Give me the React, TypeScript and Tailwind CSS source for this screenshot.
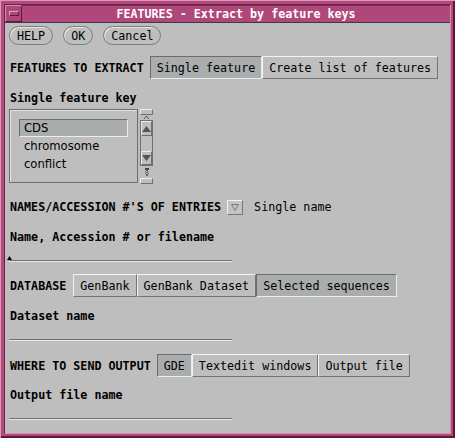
import React from "react";
import clsx from "clsx";

const mono = "font-[family-name:'DejaVu_Sans_Mono',monospace] text-[11.7px] leading-[14px] text-black";
const sans = "font-[family-name:'DejaVu_Sans',sans-serif] text-[11.6px] leading-[14px] text-black";

function Pill({ label }: { label: string }) {
  return (
    <div className="h-[19px] px-[7px] flex items-center rounded-full border border-[#7c7c7c] shadow-[inset_1px_1px_0_#e6e6e6]">
      <span className={mono}>{label}</span>
    </div>
  );
}

function Seg({ label, on }: { label: string; on?: boolean }) {
  return (
    <div
      className={clsx(
        "h-[23px] px-[6px] flex items-center border",
        on
          ? "bg-[#a9adad] border-t-[#6c6c6c] border-l-[#6c6c6c] border-b-[#ececec] border-r-[#ececec]"
          : "bg-[#bebebe] border-t-[#f2f2f2] border-l-[#f2f2f2] border-b-[#737373] border-r-[#737373]"
      )}
    >
      <span className={mono}>{label}</span>
    </div>
  );
}

function Label({ text, className }: { text: string; className?: string }) {
  return <div className={clsx(mono, "font-bold ml-[1px] h-[14px] whitespace-nowrap", className)}>{text}</div>;
}

function FieldLine({ caret, className }: { caret?: boolean; className?: string }) {
  return (
    <div className={clsx("relative w-[223px] h-[2px] border-t border-[#6e6e6e] bg-[#e8e8e8]", className)}>
      {caret && (
        <svg className="absolute left-[-2px] top-[-5px]" width="5" height="5" viewBox="0 0 5 5">
          <path d="M2.5 0 L5 4 L0 4 Z" fill="#000" />
        </svg>
      )}
    </div>
  );
}

function ScrollBar() {
  const box = "border border-t-[#ececec] border-l-[#ececec] border-b-[#6e6e6e] border-r-[#6e6e6e]";
  return (
    <div className="w-[13px] flex flex-col">
      <div className={clsx(box, "h-[6px]")} />
      <div className="h-[5px] flex justify-center items-center">
        <svg width="5" height="3" viewBox="0 0 5 3">
          <path d="M0 3 L2.5 0 L5 3" fill="none" stroke="#555" strokeWidth="1" />
        </svg>
      </div>
      <div className="border border-[#707070] flex flex-col">
        <div className={clsx(box, "h-[15px] flex items-center justify-center")}>
          <svg width="9" height="6" viewBox="0 0 9 6">
            <path d="M4.5 0 L9 6 L0 6 Z" fill="#555" />
          </svg>
        </div>
        <div className="h-[15px]" />
        <div className={clsx(box, "h-[14px] flex items-center justify-center")}>
          <svg width="9" height="6" viewBox="0 0 9 6">
            <path d="M0 0 L9 0 L4.5 6 Z" fill="#555" />
          </svg>
        </div>
      </div>
      <div className="h-[12px] flex justify-center items-center">
        <svg width="4" height="8" viewBox="0 0 4 8">
          <rect x="0" y="0" width="4" height="2" fill="#444" />
          <rect x="1" y="2" width="2" height="1" fill="#666" />
          <rect x="0" y="3" width="1" height="1" fill="#666" />
          <rect x="2" y="3" width="1" height="1" fill="#666" />
          <rect x="1" y="4" width="2" height="1" fill="#666" />
          <rect x="0" y="5" width="1" height="1" fill="#666" />
          <rect x="3" y="5" width="1" height="1" fill="#666" />
          <rect x="1" y="6" width="2" height="2" fill="#666" />
        </svg>
      </div>
      <div className={clsx(box, "h-[6px]")} />
    </div>
  );
}

export default function App() {
  return (
    <div className="w-[455px] h-[438px] bg-[#b24a7b] p-[4px] shadow-[inset_1px_1px_0_#e195b8,inset_-2px_-2px_0_#5a1a3b]">
      <div className="w-full h-full flex flex-col border border-t-[#6a2148] border-l-[#6a2148] border-b-[#d98aae] border-r-[#d98aae]">
        {/* title bar */}
        <div className="h-[18px] flex border-b border-[#3c3c3c] bg-[#b0477a]">
          <div className="w-[17px] h-[17px] flex items-center justify-center border border-t-[#d98aae] border-l-[#d98aae] border-b-[#5e1c3e] border-r-[#5e1c3e]">
            <div className="w-[10px] h-[5px] bg-[#b0477a] border border-t-[#e7a3c3] border-l-[#e7a3c3] border-b-[#5e1c3e] border-r-[#5e1c3e]" />
          </div>
          <div className="flex-1 flex items-center justify-center border-t border-[#7c2a55]">
            <span className={clsx(mono, "font-bold text-white")}>FEATURES - Extract by feature keys</span>
          </div>
        </div>

        {/* body */}
        <div className="flex-1 bg-[#bebebe] flex flex-col pl-[4px]">
          <div className="flex gap-[10px] mt-[3px]">
            <Pill label="HELP" />
            <Pill label="OK" />
            <Pill label="Cancel" />
          </div>

          <div className="flex items-center mt-[11px]">
            <Label text="FEATURES TO EXTRACT" className="mr-[6px]" />
            <Seg label="Single feature" on />
            <Seg label="Create list of features" />
          </div>

          <Label text="Single feature key" className="mt-[12px]" />

          <div className="flex gap-[2px] mt-[4px]">
            <div className="w-[129px] h-[74px] border border-[#6e6e6e] shadow-[inset_1px_1px_0_#e4e4e4] pt-[9px] pl-[9px] pr-[9px] flex flex-col">
              <div className="h-[18px] flex items-center pl-[4px] bg-[#a9adad] border border-t-[#6c6c6c] border-l-[#6c6c6c] border-b-[#ececec] border-r-[#ececec]">
                <span className={sans}>CDS</span>
              </div>
              <div className="h-[18px] flex items-center pl-[5px]">
                <span className={sans}>chromosome</span>
              </div>
              <div className="h-[18px] flex items-center pl-[5px]">
                <span className={sans}>conflict</span>
              </div>
            </div>
            <ScrollBar />
          </div>

          <div className="flex items-center h-[16px] mt-[15px]">
            <Label text="NAMES/ACCESSION #'S OF ENTRIES" className="mr-[6px]" />
            <div className="w-[16px] h-[15px] flex items-center justify-center bg-[#c4c4c4] border border-t-[#f0f0f0] border-l-[#f0f0f0] border-b-[#777] border-r-[#777]">
              <svg width="8" height="7" viewBox="0 0 8 7">
                <path d="M0.5 0.5 L7.5 0.5 L4 6.5 Z" fill="none" stroke="#7a7a7a" strokeWidth="1" />
              </svg>
            </div>
            <span className={clsx(mono, "ml-[11px]")}>Single name</span>
          </div>

          <Label text="Name, Accession # or filename" className="mt-[15px]" />

          <FieldLine caret className="mt-[16px]" />

          <div className="flex items-center mt-[12px]">
            <Label text="DATABASE" className="mr-[7px]" />
            <Seg label="GenBank" />
            <Seg label="GenBank Dataset" />
            <Seg label="Selected sequences" on />
          </div>

          <Label text="Dataset name" className="mt-[12px]" />

          <FieldLine className="mt-[16px]" />

          <div className="flex items-center mt-[13px]">
            <Label text="WHERE TO SEND OUTPUT" className="mr-[6px]" />
            <Seg label="GDE" on />
            <Seg label="Textedit windows" />
            <Seg label="Output file" />
          </div>

          <Label text="Output file name" className="mt-[11px]" />

          <FieldLine className="mt-[16px]" />
        </div>
      </div>
    </div>
  );
}
